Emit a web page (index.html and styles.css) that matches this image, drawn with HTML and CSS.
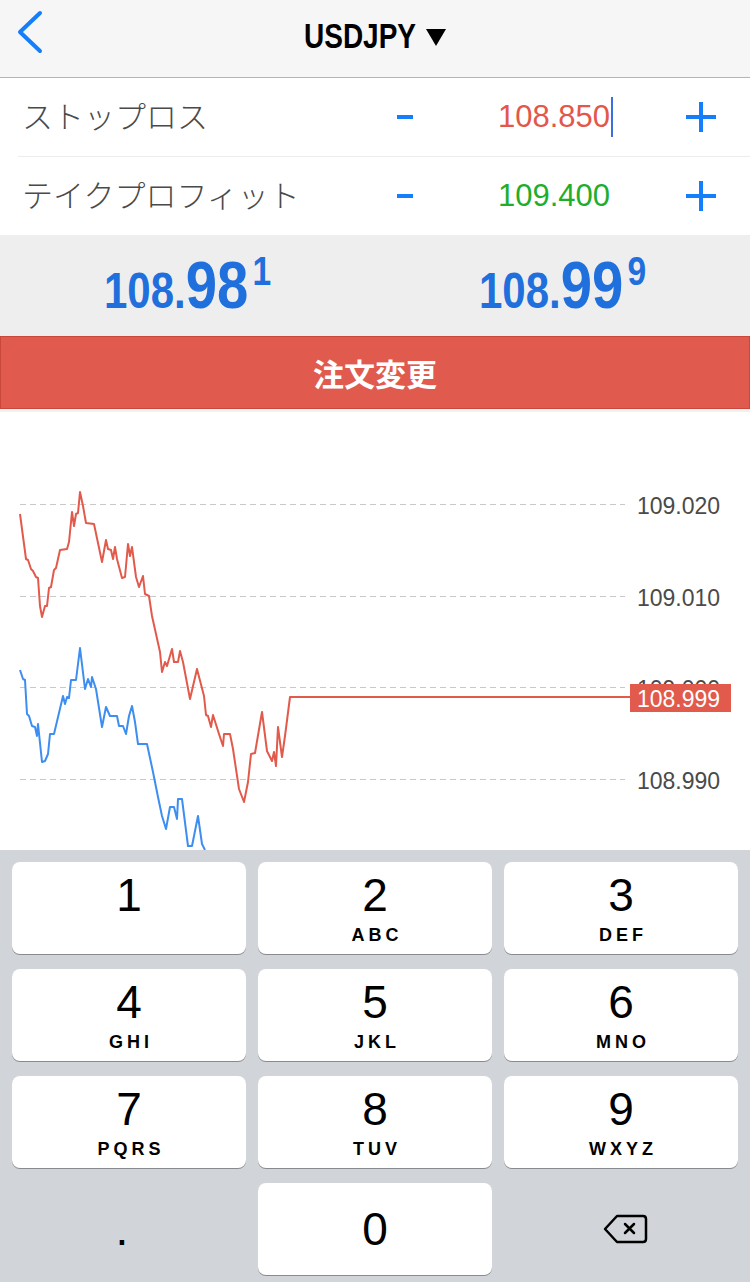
FILE: index.html
```html
<!DOCTYPE html>
<html lang="ja">

<head>
  <meta charset="UTF-8">
  <meta name="viewport" content="width=device-width, initial-scale=1.0">
  <title>USDJPY 注文変更</title>
  <link rel="stylesheet" href="styles.css">
</head>

<body>
  <header class="nav">
    <span class="back">
      <svg width="60" height="77" viewBox="0 0 60 77">
        <polyline points="40,13 20,32 40,51" fill="none" stroke="#157efb" stroke-width="4" stroke-linecap="round" stroke-linejoin="round"/>
      </svg>
    </span>
    <div class="nav-title">
      <span class="symbol">USDJPY</span>
      <svg class="caret" width="20" height="17" viewBox="0 0 20 17"><polygon points="0,0 20,0 10,17" fill="#000"/></svg>
    </div>
    <span></span>
  </header>

  <section class="levels">
    <div class="level">
      <span class="level-name">ストップロス</span>
      <span class="step"><svg width="16" height="4"><rect width="16" height="4" fill="#157efb"/></svg></span>
      <span class="level-value sl">108.850</span>
      <span class="cursor"></span>
      <span></span>
      <span class="step"><svg width="30" height="30"><rect x="0" y="13" width="30" height="4" fill="#157efb"/><rect x="13" y="0" width="4" height="30" fill="#157efb"/></svg></span>
    </div>
    <div class="level">
      <span class="level-name">テイクプロフィット</span>
      <span class="step"><svg width="16" height="4"><rect width="16" height="4" fill="#157efb"/></svg></span>
      <span class="level-value tp">109.400</span>
      <span></span>
      <span></span>
      <span class="step"><svg width="30" height="30"><rect x="0" y="13" width="30" height="4" fill="#157efb"/><rect x="13" y="0" width="4" height="30" fill="#157efb"/></svg></span>
    </div>
  </section>

  <section class="quote">
    <div class="quote-side"><span class="price"><span class="p-small">108.</span><span class="p-big">98</span><span class="p-sup">1</span></span></div>
    <div class="quote-side"><span class="price"><span class="p-small">108.</span><span class="p-big">99</span><span class="p-sup">9</span></span></div>
  </section>

  <button class="modify">注文変更</button>

  <section class="chart">
    <svg width="750" height="441" viewBox="0 0 750 441">
      <g stroke="#c9c9c9" stroke-width="1" stroke-dasharray="6 4">
        <line x1="20" y1="95.5" x2="625" y2="95.5"/>
        <line x1="20" y1="187.5" x2="625" y2="187.5"/>
        <line x1="20" y1="278.5" x2="625" y2="278.5"/>
        <line x1="20" y1="370.5" x2="625" y2="370.5"/>
      </g>
      <g class="axis">
        <text x="637" y="105">109.020</text>
        <text x="637" y="197">109.010</text>
        <text x="637" y="288">109.000</text>
        <text x="637" y="380">108.990</text>
      </g>
      <polyline fill="none" stroke="#3d8ef0" stroke-width="2" stroke-linejoin="round"
        points="20,261 23,270 25,271 27,305 29,307 32,317 35,318 37,327 38,315 42,353 45,352 48,345 50,325 54,325 63,287 65,295 67,288 69,289 71,271 76,271 80,239 85,280 88,270 91,278 92,268 96,280 102,318 106,298 110,307 117,307 119,317 123,317 126,325 129,307 132,297 135,313 138,335 147,335 153,363 158,388 162,407 166,420 170,398 174,398 177,410 178,390 182,390 188,437 192,437 198,407 202,435 205,441"/>
      <polyline fill="none" stroke="#e25a4b" stroke-width="2" stroke-linejoin="round"
        points="20,105 26,150 28,151 31,160 33,162 36,168 38,169 40,197 42,208 45,197 47,197 49,179 51,178 54,161 56,159 60,141 67,140 69,133 72,103 74,117 76,105 78,104 80,83 83,97 86,114 94,115 102,153 106,131 108,140 111,141 113,150 115,138 117,150 122,169 125,168 128,135 130,147 132,138 136,168 139,178 143,167 145,185 149,187 152,207 160,243 162,263 165,253 167,257 172,240 174,253 178,253 180,242 183,253 190,290 197,260 204,287 206,306 208,307 211,318 213,306 219,325 223,337 224,325 230,325 233,340 239,380 244,393 248,373 251,345 255,344 262,303 267,342 272,352 274,343 276,357 278,318 282,348 285,327 290,288 630,288"/>
      <rect x="630" y="275" width="101" height="28" fill="#e25a4b"/>
      <text class="last" x="637" y="298">108.999</text>
    </svg>
  </section>

  <section class="keypad">
    <div class="key"><span class="digit">1</span></div>
    <div class="key"><span class="digit">2</span><span class="letters">ABC</span></div>
    <div class="key"><span class="digit">3</span><span class="letters">DEF</span></div>
    <div class="key"><span class="digit">4</span><span class="letters">GHI</span></div>
    <div class="key"><span class="digit">5</span><span class="letters">JKL</span></div>
    <div class="key"><span class="digit">6</span><span class="letters">MNO</span></div>
    <div class="key"><span class="digit">7</span><span class="letters">PQRS</span></div>
    <div class="key"><span class="digit">8</span><span class="letters">TUV</span></div>
    <div class="key"><span class="digit">9</span><span class="letters">WXYZ</span></div>
    <div class="key plain dot">.</div>
    <div class="key single"><span class="digit">0</span></div>
    <div class="key plain erase">
      <svg width="46" height="30" viewBox="0 0 46 30">
        <path d="M15 2 H41 Q44 2 44 5 V25 Q44 28 41 28 H15 L3 15 Z" fill="none" stroke="#000" stroke-width="2.5" stroke-linejoin="round"/>
        <path d="M23 10 L32 19 M32 10 L23 19" stroke="#000" stroke-width="2.5" stroke-linecap="round"/>
      </svg>
    </div>
  </section>
</body>

</html>
```

FILE: styles.css
```css
body {
  margin: 0;
  width: 750px;
  font-family: "Liberation Sans", "Noto Sans CJK JP", sans-serif;
  background: #fff;
  overflow: hidden;
}

.nav {
  height: 77px;
  border-bottom: 1px solid #b4b4b4;
  background: #f6f6f7;
  display: grid;
  grid-template-columns: 60px 1fr 60px;
  align-items: center;
}

.back svg {
  display: block;
}

.nav-title {
  display: flex;
  align-items: center;
  justify-content: center;
  margin-top: -6px;
}

.symbol {
  display: inline-block;
  font-size: 35px;
  font-weight: bold;
  color: #000;
  transform: scaleX(0.8);
  margin: 0 -14px;
}

.caret {
  margin-left: 9px;
  margin-top: 4px;
}

.level {
  height: 78px;
  display: grid;
  grid-template-columns: 1fr 60px 175px 4px 57px 60px;
  align-items: center;
  padding: 0 19px 0 22px;
}

.level + .level {
  border-top: 1px solid #ececec;
  margin-left: 18px;
  padding-left: 4px;
}

.level-name {
  font-family: "Noto Sans CJK JP", sans-serif;
  font-size: 31px;
  font-weight: 300;
  color: #4a4a4a;
  margin-bottom: 6px;
}

.step {
  display: flex;
  justify-content: center;
  align-items: center;
}

.step svg {
  display: block;
}

.level-value {
  text-align: right;
  font-size: 31px;
}

.sl {
  color: #e3574a;
}

.tp {
  color: #1fae2c;
}

.cursor {
  width: 2px;
  height: 40px;
  margin-left: 1px;
  background: #3b6fe0;
}

.quote {
  height: 101px;
  background: #eeeeee;
  display: grid;
  grid-template-columns: 1fr 1fr;
  align-items: center;
}

.quote-side {
  text-align: center;
}

.price {
  display: inline-block;
  font-size: 67px;
  line-height: 67px;
  font-weight: bold;
  color: #1f6fdd;
  transform: scaleX(0.84);
  white-space: nowrap;
  margin-top: 4px;
}

.p-small {
  font-size: 50px;
}

.p-big {
  font-size: 67px;
}

.p-sup {
  font-size: 40px;
  line-height: 40px;
  vertical-align: top;
  margin-left: 5px;
}

.modify {
  display: block;
  width: 750px;
  height: 73px;
  margin: 0;
  padding: 0;
  border: 1px solid #c9473b;
  background: #e05b4e;
  color: #fff;
  font-family: "Noto Sans CJK JP", sans-serif;
  font-size: 31px;
  font-weight: bold;
  box-shadow: 0 3px 0 #f1f1f1;
}

.chart {
  height: 441px;
}

.chart svg {
  display: block;
}

.axis text {
  font-family: "Liberation Sans", sans-serif;
  font-size: 23px;
  fill: #4a4a4a;
}

.last {
  font-family: "Liberation Sans", sans-serif;
  font-size: 23px;
  fill: #fff;
}

.keypad {
  height: 432px;
  box-sizing: border-box;
  background: #d1d4d9;
  padding: 12px 12px 0;
  display: grid;
  grid-template-columns: repeat(3, 1fr);
  grid-template-rows: repeat(4, 92px);
  column-gap: 12px;
  row-gap: 15px;
}

.key {
  background: #fff;
  border-radius: 8px;
  box-shadow: 0 1px 0 #898a8d;
  display: flex;
  flex-direction: column;
  align-items: center;
  padding-top: 10px;
  box-sizing: border-box;
  color: #000;
}

.digit {
  font-size: 46px;
  line-height: 46px;
}

.letters {
  font-size: 18px;
  line-height: 20px;
  font-weight: bold;
  letter-spacing: 4px;
  padding-left: 4px;
  margin-top: 7px;
}

.key.single {
  justify-content: center;
  padding-top: 0;
}

.key.plain {
  background: none;
  box-shadow: none;
  justify-content: center;
  padding-top: 0;
}

.key.dot {
  font-size: 46px;
  padding-right: 14px;
}

.key.erase {
  padding-left: 8px;
}
```
